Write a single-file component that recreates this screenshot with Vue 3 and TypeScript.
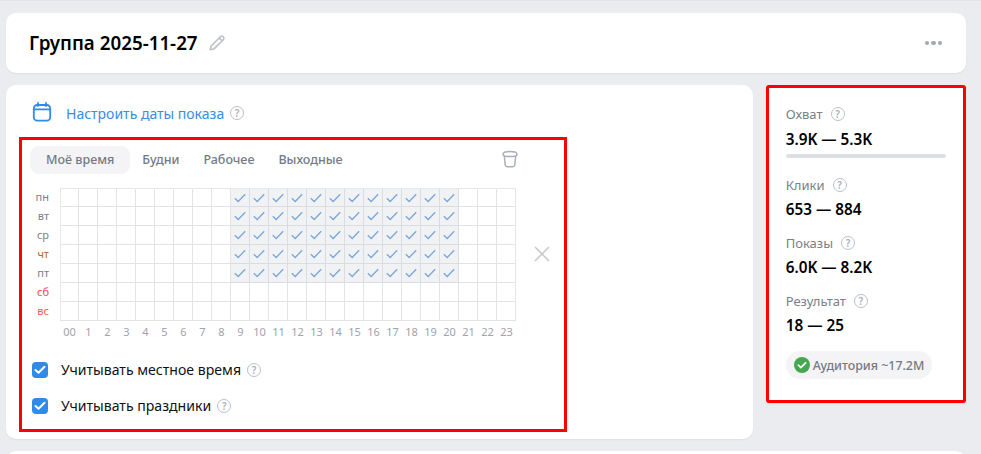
<script setup lang="ts">
const days = [
  { label: 'пн', tone: 'plain', on: true },
  { label: 'вт', tone: 'plain', on: true },
  { label: 'ср', tone: 'plain', on: true },
  { label: 'чт', tone: 'warm', on: true },
  { label: 'пт', tone: 'plain', on: true },
  { label: 'сб', tone: 'red', on: false },
  { label: 'вс', tone: 'orange', on: false },
]
const hours = Array.from({ length: 24 }, (_, i) => i)
const tabs = ['Моё время', 'Будни', 'Рабочее', 'Выходные']
const stats = [
  { label: 'Охват', value: '3.9K — 5.3K', bar: true },
  { label: 'Клики', value: '653 — 884', bar: false },
  { label: 'Показы', value: '6.0K — 8.2K', bar: false },
  { label: 'Результат', value: '18 — 25', bar: false },
]
const options = ['Учитывать местное время', 'Учитывать праздники']
const hourLabel = (h: number): string => (h === 0 ? '00' : String(h))
const active = (on: boolean, h: number): boolean => on && h >= 9 && h <= 20
</script>

<template>
  <div class="page">
    <header class="card head">
      <h1 class="title">Группа 2025-11-27</h1>
      <svg class="pencil" width="18" height="18" viewBox="0 0 18 18" fill="none" stroke="#b9bec7" stroke-width="1.5" stroke-linejoin="round">
        <path d="M2.2 15.8l.9-3.8L12.6 2.5a1.5 1.5 0 0 1 2.1 0l.8.8a1.5 1.5 0 0 1 0 2.1L6 14.9l-3.8.9z" />
        <path d="M11.2 3.9l2.9 2.9" />
      </svg>
      <span class="dots"><i></i><i></i><i></i></span>
    </header>

    <div class="columns">
      <section class="card main">
        <div class="dates">
          <svg class="cal" width="20" height="20" viewBox="0 0 20 20" fill="none" stroke="#2f8ae8" stroke-width="1.8" stroke-linecap="round">
            <rect x="1.8" y="3" width="16.4" height="15.6" rx="3.4" />
            <path d="M1.8 7.4h16.4M6 1v3M14 1v3" />
          </svg>
          <span class="dates-link">Настроить даты показа</span>
          <span class="hint">?</span>
        </div>

        <div class="schedule">
          <div class="tabs">
            <span v-for="(t, i) in tabs" :key="t" class="tab" :class="{ current: i === 0 }">{{ t }}</span>
            <svg class="trash" width="18" height="18" viewBox="0 0 18 18" fill="none" stroke="#a9afb9" stroke-width="1.5" stroke-linejoin="round">
              <path d="M2 4.2C2 2.6 5 1.6 9 1.6s7 1 7 2.6S13 6.6 9 6.6 2 5.800 2 4.2z" />
              <path d="M3.300 6l.9 9c.1 1 1 1.700 2 1.700h5.600c1 0 1.900-.7 2-1.700l.9-9" />
            </svg>
          </div>

          <div class="board">
            <div class="day-labels">
              <span v-for="d in days" :key="d.label" class="day" :class="d.tone">{{ d.label }}</span>
            </div>
            <div class="grid-wrap">
              <div class="grid">
                <template v-for="d in days" :key="d.label">
                  <span v-for="h in hours" :key="h" class="cell" :class="{ on: active(d.on, h) }">
                    <svg v-if="active(d.on, h)" width="12" height="10" viewBox="0 0 12 10" fill="none" stroke="#7aa6dc" stroke-width="1.3">
                      <path d="M.8 5.200l3.400 3.300L11.200 1.200" />
                    </svg>
                  </span>
                </template>
              </div>
              <div class="hours">
                <span v-for="h in hours" :key="h" class="hour">{{ hourLabel(h) }}</span>
              </div>
            </div>
            <svg class="close" width="16" height="16" viewBox="0 0 16 16" fill="none" stroke="#c3c8cf" stroke-width="1.5">
              <path d="M1 1l14 14M15 1L1 15" />
            </svg>
          </div>

          <div class="options">
            <label v-for="o in options" :key="o" class="option">
              <span class="box">
                <svg width="12" height="10" viewBox="0 0 12 10" fill="none" stroke="#fff" stroke-width="2" stroke-linecap="round" stroke-linejoin="round">
                  <path d="M1.500 5l3 2.800 6-6" />
                </svg>
              </span>
              <span class="option-text">{{ o }}</span>
              <span class="hint">?</span>
            </label>
          </div>
        </div>
      </section>

      <aside class="card side">
        <div v-for="s in stats" :key="s.label" class="stat" :class="{ 'with-bar': s.bar }">
          <div class="stat-label">{{ s.label }}<span class="hint">?</span></div>
          <div class="stat-value">{{ s.value }}</div>
          <div v-if="s.bar" class="bar"></div>
        </div>
        <div class="audience">
          <svg width="16" height="16" viewBox="0 0 16 16">
            <circle cx="8" cy="8" r="8" fill="#43a850" />
            <path d="M4.400 8.200l2.500 2.400 4.700-4.800" fill="none" stroke="#fff" stroke-width="1.800" stroke-linecap="round" stroke-linejoin="round" />
          </svg>
          <span>Аудитория ~17.2M</span>
        </div>
      </aside>
    </div>

    <div class="card next"></div>
  </div>
</template>

<style>
html, body {
  margin: 0;
  background: #ebecf0;
}
</style>

<style scoped>
.page {
  box-sizing: border-box;
  width: 981px;
  height: 454px;
  overflow: hidden;
  padding: 13px 15px 0 6px;
  background: #ebecf0;
  border-top: 1px solid #e3e4e8;
  font-family: "Noto Sans", sans-serif;
  color: #000;
}
.card {
  background: #fff;
  border-radius: 10px;
  box-shadow: 0 1px 2px rgba(0, 0, 0, 0.06);
}
.head {
  display: flex;
  align-items: center;
  height: 60px;
  margin-top: -1px;
  padding: 0 24px 0 23px;
}
.title {
  margin: 0;
  font-size: 18.800px;
  font-weight: 600;
  line-height: 24px;
}
.pencil {
  margin-left: 10px;
}
.dots {
  display: flex;
  gap: 2px;
  margin-left: auto;
}
.dots i {
  width: 4.500px;
  height: 4.500px;
  border-radius: 50%;
  background: #a3a8b3;
}
.columns {
  display: flex;
  align-items: flex-start;
  margin-top: 12px;
}
.main {
  box-sizing: border-box;
  width: 748px;
  height: 354px;
  padding: 16px 0 0 13px;
}
.dates {
  display: flex;
  align-items: center;
  height: 24px;
  padding-left: 13px;
}
.cal {
  margin: -2px 14px 0 0;
}
.dates-link {
  font-size: 14px;
  color: #3b8be0;
}
.hint {
  display: inline-flex;
  align-items: center;
  justify-content: center;
  box-sizing: border-box;
  width: 14px;
  height: 14px;
  margin-left: 6px;
  border: 1.300px solid #b9bfc9;
  border-radius: 50%;
  font-size: 10px;
  font-weight: 600;
  line-height: 1;
  color: #a9afb9;
}
.schedule {
  box-sizing: border-box;
  width: 548px;
  height: 295px;
  margin-top: 12px;
  padding: 6px 0 0 8px;
  border: 3px solid #fe0000;
}
.tabs {
  display: flex;
  align-items: center;
  height: 28px;
}
.tab {
  padding: 0 12px;
  font-size: 12.500px;
  font-weight: 500;
  line-height: 28px;
  color: #747a84;
  border-radius: 9px;
}
.tab.current {
  padding: 0 16px;
  background: #f4f4f6;
}
.trash {
  margin: -2px 0 0 146px;
}
.board {
  display: flex;
  align-items: flex-start;
  margin-top: 14px;
}
.day-labels {
  display: flex;
  flex-direction: column;
  width: 19px;
  margin: -1px 11px 0 0;
  text-align: right;
}
.day {
  height: 19px;
  font-size: 11px;
  line-height: 19px;
  color: #7b8089;
}
.day.warm {
  color: #b5633c;
}
.day.red {
  color: #ef4444;
}
.day.orange {
  color: #f0603c;
}
.grid-wrap {
  width: 456px;
}
.grid {
  display: grid;
  grid-template-columns: 18px repeat(23, 19px);
  grid-template-rows: 18px repeat(6, 19px);
  box-sizing: border-box;
  width: 456px;
  border-top: 1px solid #e6e7ea;
  border-left: 1px solid #e6e7ea;
}
.cell {
  display: flex;
  align-items: center;
  justify-content: center;
  box-sizing: border-box;
  border-right: 1px solid #e2e3e7;
  border-bottom: 1px solid #e2e3e7;
}
.cell.on {
  background: #f1f2f4;
  border-color: #dadce1;
}
.hours {
  display: grid;
  grid-template-columns: repeat(24, 19px);
  margin-top: 3px;
}
.hour {
  font-size: 11px;
  line-height: 16px;
  text-align: center;
  color: #9ea3ac;
}
.close {
  margin: 58px 0 0 18px;
}
.options {
  display: flex;
  flex-direction: column;
  gap: 16px;
  margin-top: 20px;
}
.option {
  display: flex;
  align-items: center;
  height: 20px;
  padding-left: 2px;
}
.box {
  display: flex;
  align-items: center;
  justify-content: center;
  width: 16px;
  height: 16px;
  margin-right: 13px;
  background: #2f8ae8;
  border-radius: 4px;
}
.option-text {
  font-size: 14.100px;
  line-height: 20px;
  color: #111;
}
.side {
  box-sizing: border-box;
  width: 200px;
  height: 318px;
  margin-left: 13px;
  padding: 16px 0 0 16.500px;
  border: 3px solid #fe0000;
  border-radius: 3px;
}
.stat {
  margin-bottom: 13px;
}
.stat.with-bar {
  margin-bottom: 17px;
}
.stat-label {
  display: flex;
  align-items: center;
  height: 20px;
  font-size: 13px;
  color: #7b8089;
}
.stat-label .hint {
  margin-left: 8px;
}
.stat-value {
  height: 22px;
  margin-top: 3px;
  font-size: 15.300px;
  font-weight: 600;
  line-height: 22px;
}
.with-bar .stat-value {
  margin-top: 4px;
}
.bar {
  width: 160px;
  height: 4px;
  margin-top: 4px;
  background: #dce0e4;
  border-radius: 2px;
}
.audience {
  display: inline-flex;
  align-items: center;
  gap: 3px;
  height: 28px;
  margin-top: 2px;
  padding: 0 8px;
  background: #f4f4f6;
  border-radius: 14px;
  font-size: 12.400px;
  font-weight: 500;
  color: #747a84;
}
.next {
  width: 960px;
  height: 40px;
  margin-top: 12px;
}
</style>
